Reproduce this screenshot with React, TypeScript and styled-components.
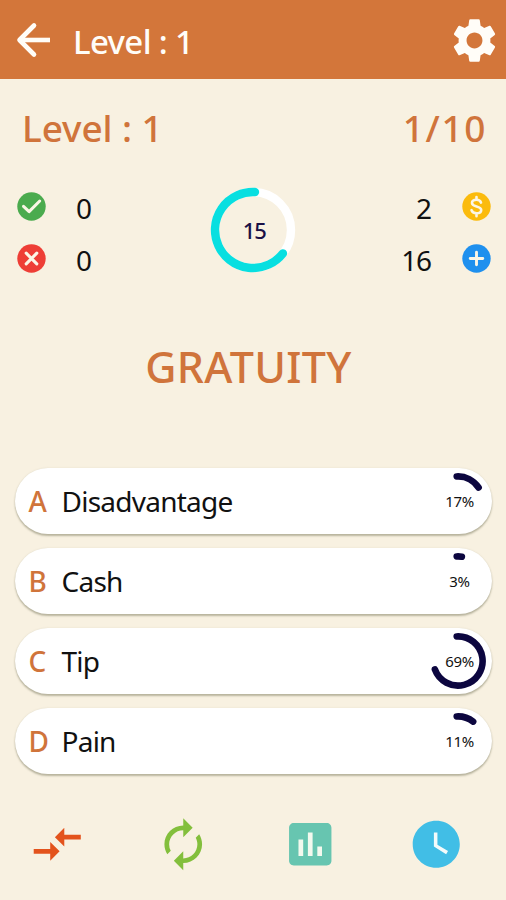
import React from 'react';
import styled, { createGlobalStyle } from 'styled-components';
import { MdAssessment, MdAutorenew, MdCompareArrows, MdSettings, MdWatchLater } from 'react-icons/md';

const color = {
  bar: '#d3763a',
  page: '#f8f1e1',
  accent: '#d0743b',
  ink: '#111111',
  navy: '#0c063f',
  cyan: '#08dfe0',
};

const GlobalStyle = createGlobalStyle`
  * { box-sizing: border-box; }
  html, body { margin: 0; background: ${color.page}; }
  body { font-family: 'Noto Sans', 'Open Sans', sans-serif; color: ${color.ink}; }
  svg { display: block; flex: none; }
  button { font: inherit; color: inherit; border: 0; padding: 0; margin: 0; background: none; }
`;

const Screen = styled.div`
  width: 506px;
  height: 900px;
  display: flex;
  flex-direction: column;
  overflow: hidden;
  background: ${color.page};
`;

const AppBar = styled.header`
  height: 79px;
  flex: none;
  display: flex;
  align-items: center;
  padding: 1px 5px 0 9px;
  background: ${color.bar};
  color: #fffdf8;
`;

const AppTitle = styled.h1`
  flex: 1;
  margin: 3px 0 0 16px;
  font-size: 33px;
  line-height: 44px;
  font-weight: 500;
  letter-spacing: -0.65px;
`;

const LevelRow = styled.div`
  height: 50px;
  flex: none;
  margin-top: 24px;
  padding: 0 19px 0 22px;
  display: flex;
  justify-content: space-between;
  color: ${color.accent};
  font-size: 37px;
  line-height: 50px;
  font-weight: 500;
`;

const LevelName = styled.span`
  letter-spacing: -0.1px;
`;

const Progress = styled.span`
  letter-spacing: 1.6px;
`;

const Scoreboard = styled.section`
  flex: none;
  height: 105px;
  margin-top: 27px;
  padding: 0 15.5px 0 17px;
  display: grid;
  grid-template-columns: 1fr 86px 1fr;
  align-items: center;
`;

const StatColumn = styled.div`
  display: flex;
  flex-direction: column;
`;

const Stat = styled.div<{ $end?: boolean }>`
  height: 52px;
  display: flex;
  flex-direction: ${(p) => (p.$end ? 'row-reverse' : 'row')};
  align-items: center;
  gap: ${(p) => (p.$end ? '31px' : '30px')};
`;

const StatValue = styled.span`
  padding-top: 3px;
  font-size: 28px;
  line-height: 40px;
  letter-spacing: -1.4px;
`;

const Timer = styled.div`
  display: grid;
  place-items: center;
  padding-bottom: 6px;
  margin: 0 1px 0 -1px;
  > * { grid-area: 1 / 1; }
`;

const TimerValue = styled.span`
  padding-left: 3px;
  font-size: 22px;
  line-height: 30px;
  font-weight: 500;
  letter-spacing: -1px;
  color: #1a1046;
`;

const Question = styled.h2`
  flex: none;
  margin: 51px 0 0;
  padding-right: 9px;
  text-align: center;
  font-size: 43px;
  line-height: 62px;
  font-weight: 500;
  letter-spacing: 0.3px;
  color: ${color.accent};
`;

const Answers = styled.section`
  flex: none;
  margin: 70px 14px 0 15px;
  display: flex;
  flex-direction: column;
  gap: 14px;
`;

const Answer = styled.button`
  height: 66px;
  display: flex;
  align-items: center;
  text-align: left;
  padding: 0 6px 0 13.5px;
  border-radius: 33px;
  background: #fff;
  box-shadow: 0 2px 2px rgba(95, 95, 65, 0.4), 0 0 2px rgba(120, 120, 90, 0.16);
  font-size: 28px;
  line-height: 40px;
`;

const Letter = styled.span`
  width: 33px;
  font-weight: 500;
  color: ${color.accent};
`;

const AnswerText = styled.span`
  flex: 1;
  letter-spacing: -0.75px;
`;

const Poll = styled.div`
  display: grid;
  place-items: center;
  > * { grid-area: 1 / 1; }
`;

const PollValue = styled.span`
  padding: 0 0 0 3px;
  font-size: 15px;
  line-height: 20px;
  letter-spacing: -0.3px;
`;

const Lifelines = styled.footer`
  flex: none;
  margin-top: 42px;
  padding: 0 41px 0 28.5px;
  display: flex;
  justify-content: space-between;
`;

const Lifeline = styled.button<{ $tint: string }>`
  color: ${(p) => p.$tint};
`;

function arcPath(center: number, r: number, from: number, to: number) {
  const point = (deg: number) => {
    const a = (deg * Math.PI) / 180;
    return `${(center + r * Math.sin(a)).toFixed(2)} ${(center - r * Math.cos(a)).toFixed(2)}`;
  };
  return `M${point(from)}A${r} ${r} 0 ${to - from > 180 ? 1 : 0} 1 ${point(to)}`;
}

function BackArrow() {
  return (
    <svg width="48" height="48" viewBox="0 0 48 48" fill="none" stroke="currentColor" strokeWidth="4.6">
      <path d="M41 24H11" />
      <path d="M25 9.5L10.5 24L25 38.5" strokeLinecap="round" strokeLinejoin="round" />
    </svg>
  );
}

function Badge({ fill, children }: { fill: string; children: React.ReactNode }) {
  return (
    <svg width="29" height="29" viewBox="0 0 29 29" fill="none" stroke="#fbf6e6" strokeLinecap="round" strokeLinejoin="round">
      <circle cx="14.5" cy="14.5" r="14.2" fill={fill} stroke="none" />
      {children}
    </svg>
  );
}

const answers = [
  { letter: 'A', text: 'Disadvantage', percent: 17, sweep: 57 },
  { letter: 'B', text: 'Cash', percent: 3, sweep: 9 },
  { letter: 'C', text: 'Tip', percent: 69, sweep: 250 },
  { letter: 'D', text: 'Pain', percent: 11, sweep: 38 },
];

export default function App() {
  return (
    <Screen>
      <GlobalStyle />
      <AppBar>
        <BackArrow />
        <AppTitle>Level : 1</AppTitle>
        <MdSettings size={53} />
      </AppBar>

      <LevelRow>
        <LevelName>Level : 1</LevelName>
        <Progress>1/10</Progress>
      </LevelRow>

      <Scoreboard>
        <StatColumn>
          <Stat>
            <Badge fill="#4bab4e">
              <path d="M6.5 14.3l5.6 5.3L22.7 9" strokeWidth="3" />
            </Badge>
            <StatValue>0</StatValue>
          </Stat>
          <Stat>
            <Badge fill="#ee3e36">
              <path d="M9.2 9.2l10.6 10.6M19.8 9.2L9.2 19.8" strokeWidth="3.1" />
            </Badge>
            <StatValue>0</StatValue>
          </Stat>
        </StatColumn>
        <Timer>
          <svg width="86" height="86" viewBox="0 0 86 86" fill="none" strokeWidth="8.4">
            <circle cx="43" cy="43" r="38" stroke="#fff" />
            <path d={arcPath(43, 38, 128, 363)} stroke={color.cyan} strokeLinecap="round" />
          </svg>
          <TimerValue>15</TimerValue>
        </Timer>
        <StatColumn>
          <Stat $end>
            <Badge fill="#fbbb0d">
              <path
                d="M19 10.6C18.4 8.7 16.7 7.8 14.5 7.8c-2.6 0-4.5 1.2-4.5 3.2 0 4.4 9.2 2.4 9.2 7 0 2.1-2 3.3-4.7 3.3-2.5 0-4.4-1-5-3.1M14.5 5v2.8M14.5 21.3v2.9"
                strokeWidth="2.6"
              />
            </Badge>
            <StatValue>2</StatValue>
          </Stat>
          <Stat $end>
            <Badge fill="#1f90ee">
              <path d="M14.5 8.2v12.6M8.2 14.5h12.6" strokeWidth="2.9" />
            </Badge>
            <StatValue>16</StatValue>
          </Stat>
        </StatColumn>
      </Scoreboard>

      <Question>GRATUITY</Question>

      <Answers>
        {answers.map((a) => (
          <Answer key={a.letter}>
            <Letter>{a.letter}</Letter>
            <AnswerText>{a.text}</AnswerText>
            <Poll>
              <svg width="56" height="56" viewBox="0 0 56 56" fill="none">
                <path d={arcPath(28, 24.6, -3, a.sweep)} stroke={color.navy} strokeWidth="6.6" strokeLinecap="round" />
              </svg>
              <PollValue>{a.percent}%</PollValue>
            </Poll>
          </Answer>
        ))}
      </Answers>

      <Lifelines>
        <Lifeline $tint="#e3531c">
          <MdCompareArrows size={56.5} />
        </Lifeline>
        <Lifeline $tint="#83bf3c">
          <MdAutorenew size={56.5} />
        </Lifeline>
        <Lifeline $tint="#67c5b0">
          <svg width="56.5" height="56.5" viewBox="0 0 24 24">
            <path d="M6 6h12v12H6z" fill="#f3f9ee" />
            <MdAssessment size={24} />
          </svg>
        </Lifeline>
        <Lifeline $tint="#41bee6">
          <svg width="56.5" height="56.5" viewBox="0 0 24 24">
            <path d="M10 6h8v11h-8z" fill="#f3fbfb" />
            <MdWatchLater size={24} />
          </svg>
        </Lifeline>
      </Lifelines>
    </Screen>
  );
}
